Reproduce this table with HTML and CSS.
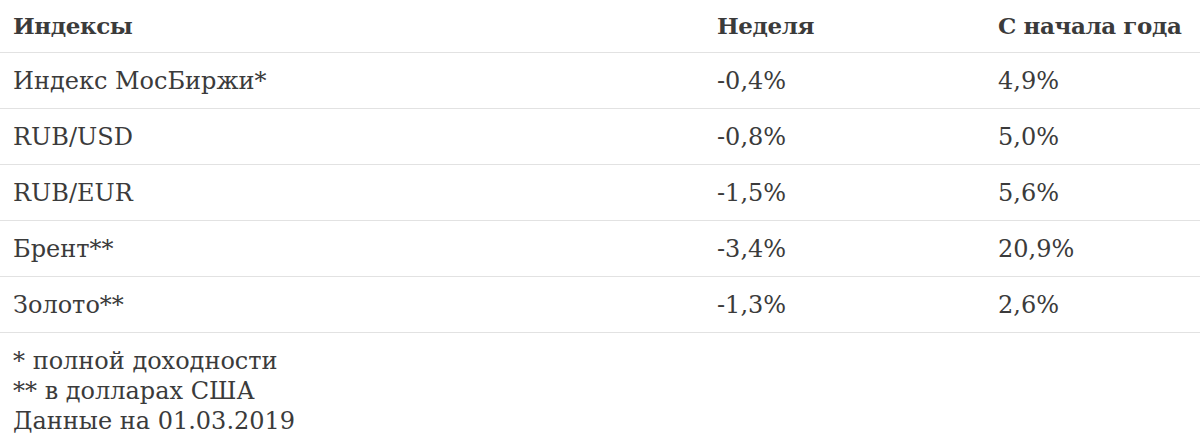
FILE: index.html
```html
<!DOCTYPE html>
<html lang="ru">
<head>
<meta charset="utf-8">
<link rel="stylesheet" href="styles.css">
</head>
<body>
<table class="idx">
  <thead>
    <tr><th class="c1">Индексы</th><th class="c2">Неделя</th><th class="c3">С начала года</th></tr>
  </thead>
  <tbody>
    <tr><td>Индекс МосБиржи*</td><td>-0,4%</td><td>4,9%</td></tr>
    <tr><td>RUB/USD</td><td>-0,8%</td><td>5,0%</td></tr>
    <tr><td>RUB/EUR</td><td>-1,5%</td><td>5,6%</td></tr>
    <tr><td>Брент**</td><td>-3,4%</td><td>20,9%</td></tr>
    <tr><td>Золото**</td><td>-1,3%</td><td>2,6%</td></tr>
  </tbody>
</table>
<div class="notes">
  <div>* полной доходности</div>
  <div>** в долларах США</div>
  <div>Данные на 01.03.2019</div>
</div>
</body>
</html>
```
FILE: styles.css
```css
html, body {
  margin: 0;
  padding: 0;
  background: #fff;
}
body {
  font-family: "DejaVu Serif", "Liberation Serif", serif;
  color: #3b3b3b;
  font-size: 24px;
  width: 1200px;
}
.idx {
  width: 1200px;
  border-collapse: collapse;
  table-layout: fixed;
}
.idx th, .idx td {
  text-align: left;
  padding: 0 0 0 13px;
  border-bottom: 1px solid #e2e2e2;
  white-space: nowrap;
}
.idx th {
  font-weight: bold;
  font-size: 23px;
  letter-spacing: -0.4px;
  height: 50px;
  vertical-align: middle;
  padding-bottom: 2px;
}
.idx td {
  height: 55px;
  vertical-align: middle;
}
.c1 { width: 691px; }
.c2 { width: 268px; }
.c3 { width: 202px; }
.notes {
  padding: 13px 0 0 13px;
  line-height: 30px;
}
```
